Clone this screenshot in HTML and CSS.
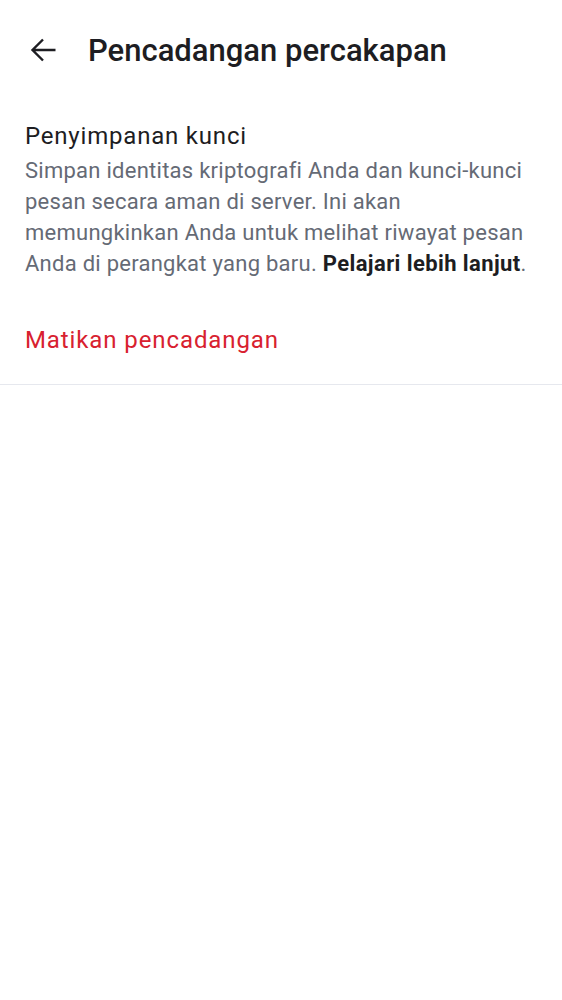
FILE: index.html
```html
<!DOCTYPE html>
<html lang="id">
<head>
<meta charset="utf-8">
<link rel="stylesheet" href="styles.css">
</head>
<body>
<header class="appbar">
  <button class="back" aria-label="Kembali">
    <svg width="26" height="24" viewBox="0 0 26 24"><path d="M25.5 12H3M13 1.5L2.5 12L13 22.5" fill="none" stroke="#1d1d22" stroke-width="2.4" stroke-linecap="butt" stroke-linejoin="miter"/></svg>
  </button>
  <h1 class="title">Pencadangan percakapan</h1>
</header>
<section class="item">
  <div class="item-title">Penyimpanan kunci</div>
  <p class="item-desc">Simpan identitas kriptografi Anda dan kunci-kunci pesan secara aman di server. Ini akan memungkinkan Anda untuk melihat riwayat pesan Anda di perangkat yang baru. <b class="learn">Pelajari lebih lanjut</b>.</p>
</section>
<section class="action">
  <div class="danger">Matikan pencadangan</div>
</section>
</body>
</html>
```
FILE: styles.css
```css
html, body { margin: 0; padding: 0; background: #fff; }
body { font-family: Roboto, "Noto Sans", sans-serif; color: #1d1d22; }
.appbar { display: flex; align-items: center; height: 100px; padding-left: 30px; }
.back { border: 0; background: none; padding: 0; width: 26px; height: 24px; display: flex; margin-right: 32px; }
.title { margin: 0; font-size: 31px; font-weight: 500; color: #1d1d22; letter-spacing: 0; }
.item { padding: 21px 25px 0 25px; }
.item-title { font-size: 24px; line-height: 30px; letter-spacing: 0.8px; color: #1d1d22; }
.item-desc { margin: 4px 0 0; font-size: 22px; line-height: 31px; letter-spacing: 0.26px; color: #656a75; }
.learn { color: #1d1d22; font-weight: 700; letter-spacing: 0.4px; }
.action { border-bottom: 1px solid #e6e8ee; padding: 46px 25px 29px; }
.danger { font-size: 24px; line-height: 30px; letter-spacing: 0.9px; color: #d8212f; }
```
